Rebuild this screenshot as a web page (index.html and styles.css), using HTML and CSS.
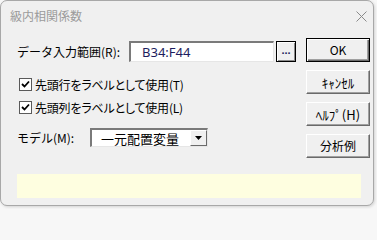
FILE: index.html
```html
<!DOCTYPE html>
<html lang="ja">
<head>
<meta charset="utf-8">
<title>級内相関係数</title>
<link rel="stylesheet" href="styles.css">
</head>
<body>
<div class="window">
  <div class="titlebar">
    <span class="title">級内相関係数</span>
    <svg class="close" width="11" height="11" viewBox="0 0 11 11"><path d="M0.5 0.5 L10.5 10.5 M10.5 0.5 L0.5 10.5" stroke="#8a8a8a" stroke-width="1" fill="none"/></svg>
  </div>
  <div class="content">
    <div class="top">
      <div class="form">
        <div class="row range-row">
          <span class="label">データ入力範囲(R):</span>
          <div class="input">B34:F44</div>
          <div class="dots">...</div>
        </div>
        <div class="row check-row first">
          <span class="checkbox"><svg width="9" height="9" viewBox="0 0 9 9"><path d="M1 4 L3.5 6.5 L8 1.5" stroke="#000" stroke-width="1.8" fill="none"/></svg></span>
          <span class="check-label">先頭行をラベルとして使用(T)</span>
        </div>
        <div class="row check-row second">
          <span class="checkbox"><svg width="9" height="9" viewBox="0 0 9 9"><path d="M1 4 L3.5 6.5 L8 1.5" stroke="#000" stroke-width="1.8" fill="none"/></svg></span>
          <span class="check-label">先頭列をラベルとして使用(L)</span>
        </div>
        <div class="row model-row">
          <span class="label model-label">モデル(M):</span>
          <div class="combo">
            <span class="combo-text">一元配置変量</span>
            <span class="combo-btn"><svg width="7" height="4" viewBox="0 0 7 4"><path d="M0 0 H7 L3.5 4 Z" fill="#000"/></svg></span>
          </div>
        </div>
      </div>
      <div class="buttons">
        <div class="btn default">OK</div>
        <div class="btn narrow">ｷｬﾝｾﾙ</div>
        <div class="btn narrow">ﾍﾙﾌﾟ(H)</div>
        <div class="btn">分析例</div>
      </div>
    </div>
    <div class="status"></div>
  </div>
</div>
</body>
</html>
```

FILE: styles.css
```css
html, body {
  margin: 0;
  padding: 0;
}
body {
  background: #f7f7f7;
  width: 377px;
  height: 209px;
  overflow: hidden;
  font-family: "Noto Sans CJK JP", "Noto Sans", sans-serif;
  font-size: 12px;
  color: #000;
}
.window {
  box-sizing: border-box;
  width: 374px;
  height: 206px;
  background: #f0f0f0;
  border: 1px solid #a8a8a8;
  border-radius: 7px;
  box-shadow: 1px 1px 3px rgba(0,0,0,0.15);
  display: flex;
  flex-direction: column;
}
.titlebar {
  height: 30px;
  display: flex;
  align-items: center;
  justify-content: space-between;
  padding: 0 6px 0 9px;
}
.title {
  color: #9b9b9b;
  font-size: 12px;
  line-height: 14px;
}
.close {
  display: block;
}
.content {
  padding: 7px 3px 0 16px;
}
.top {
  display: flex;
  justify-content: space-between;
  align-items: flex-start;
}
.form {
  display: flex;
  flex-direction: column;
  padding-top: 3px;
}
.row {
  display: flex;
  align-items: center;
}
.label {
  width: 112px;
  line-height: 14px;
}
.input {
  box-sizing: border-box;
  width: 145px;
  height: 21px;
  background: #fff;
  border-top: 2px solid #7a7a7a;
  border-left: 2px solid #7a7a7a;
  border-right: 1px solid #e6e6e6;
  border-bottom: 1px solid #e6e6e6;
  padding-left: 11px;
  font-family: "Noto Sans", "DejaVu Sans", sans-serif;
  font-size: 13px;
  line-height: 18px;
  color: #1d1d5e;
}
.dots {
  box-sizing: border-box;
  width: 20px;
  height: 21px;
  margin-left: 2px;
  background: #f0f0f0;
  border: 1px solid #000;
  box-shadow: inset 1px 1px 0 #fff, inset -1px -1px 0 #8a8a8a;
  text-align: center;
  font-family: "Liberation Sans", sans-serif;
  font-size: 11px;
  font-weight: bold;
  line-height: 17px;
  color: #1d1d5e;
}
.check-row {
  height: 13px;
}
.check-row.first {
  margin-top: 16px;
}
.check-row.second {
  margin-top: 10px;
}
.checkbox {
  box-sizing: border-box;
  width: 13px;
  height: 13px;
  margin-left: 2px;
  background: #fff;
  border: 1px solid #5a5a5a;
  display: flex;
  align-items: center;
  justify-content: center;
}
.checkbox svg {
  display: block;
}
.check-label {
  margin-left: 3px;
  line-height: 14px;
  font-feature-settings: "palt";
  letter-spacing: -0.2px;
}
.model-row {
  margin-top: 14px;
}
.model-label {
  width: 73px;
}
.combo {
  box-sizing: border-box;
  width: 118px;
  height: 19px;
  background: #fff;
  border-top: 2px solid #7a7a7a;
  border-left: 2px solid #7a7a7a;
  border-right: 1px solid #e6e6e6;
  border-bottom: 1px solid #e6e6e6;
  display: flex;
  align-items: center;
  justify-content: space-between;
}
.combo-text {
  padding-left: 9px;
  font-size: 13px;
  line-height: 15px;
}
.combo-btn {
  box-sizing: border-box;
  width: 17px;
  height: 16px;
  background: #f0f0f0;
  border-top: 1px solid #fff;
  border-left: 1px solid #fff;
  border-right: 1px solid #6a6a6a;
  border-bottom: 1px solid #6a6a6a;
  display: flex;
  align-items: center;
  justify-content: center;
}
.combo-btn svg {
  display: block;
}
.buttons {
  display: flex;
  flex-direction: column;
  gap: 8px;
}
.btn {
  box-sizing: border-box;
  width: 64px;
  height: 24px;
  background: #f0f0f0;
  border-top: 1px solid #fff;
  border-left: 1px solid #fff;
  border-right: 1px solid #6a6a6a;
  border-bottom: 1px solid #6a6a6a;
  box-shadow: inset -1px -1px 0 #a0a0a0;
  display: flex;
  align-items: center;
  justify-content: center;
  font-size: 12px;
  line-height: 14px;
}
.btn.narrow {
  font-size: 13px;
  line-height: 15px;
}
.btn.default {
  border: 1px solid #000;
  box-shadow: inset 1px 1px 0 #fff, inset -1px -1px 0 #6a6a6a, inset -2px -2px 0 #a0a0a0;
}
.status {
  width: 344px;
  height: 24px;
  margin-top: 16px;
  background: #fefee0;
}
```
